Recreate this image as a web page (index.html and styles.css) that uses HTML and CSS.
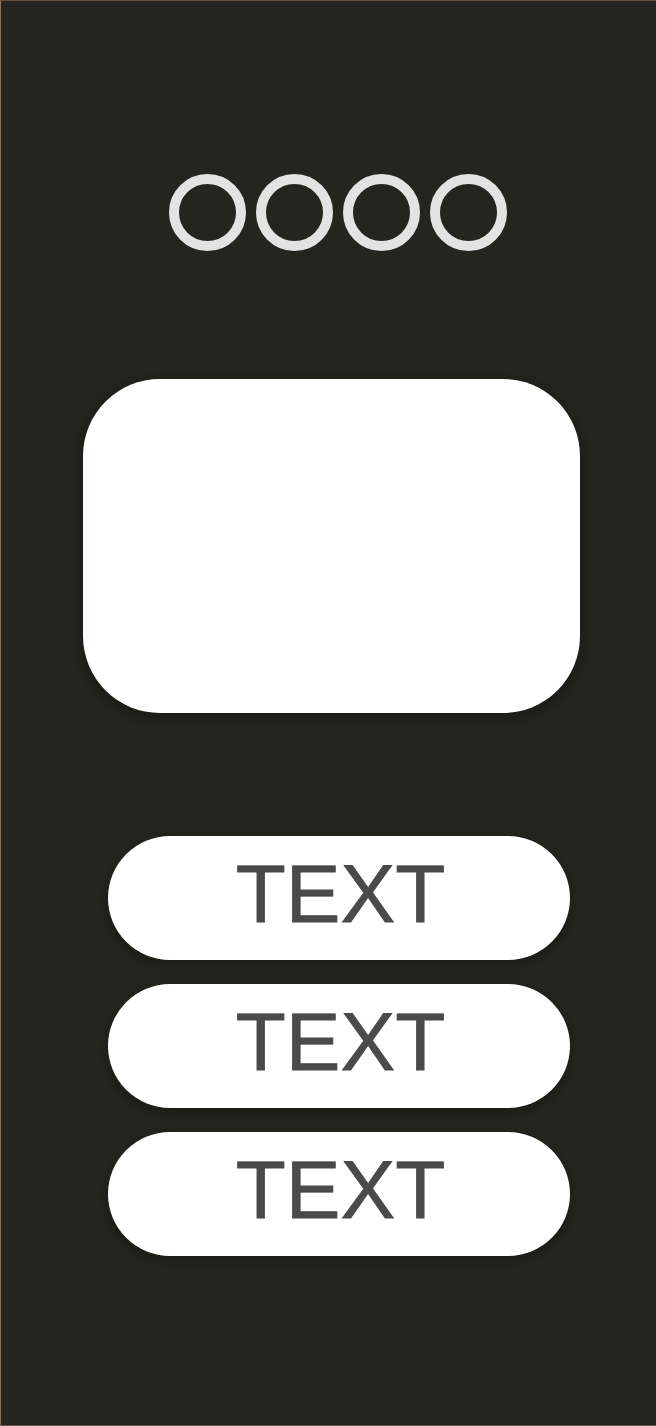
FILE: index.html
```html
<!DOCTYPE html>
<html>
<head>
<meta charset="utf-8">
<link rel="stylesheet" href="styles.css">
</head>
<body>
<div class="screen">
  <div class="dots">
    <span class="dot"></span>
    <span class="dot"></span>
    <span class="dot"></span>
    <span class="dot"></span>
  </div>
  <div class="card"></div>
  <div class="buttons">
    <div class="btn">TEXT</div>
    <div class="btn">TEXT</div>
    <div class="btn">TEXT</div>
  </div>
</div>
</body>
</html>
```
FILE: styles.css
```css
html, body {
  margin: 0;
  padding: 0;
  background: #24251e;
}
.screen {
  box-sizing: border-box;
  width: 656px;
  height: 1426px;
  background: #24251e;
  border-top: 1px solid #5e4f3f;
  border-left: 1px solid #8a7060;
  border-bottom: 1px solid #5a5446;
  display: flex;
  flex-direction: column;
  align-items: flex-start;
  padding-top: 173px;
}
.dots {
  display: flex;
  gap: 10px;
  margin-left: 168px;
}
.dot {
  box-sizing: border-box;
  width: 77px;
  height: 77px;
  border: 10px solid #e3e3e3;
  border-radius: 50%;
}
.card {
  margin-top: 128px;
  margin-left: 82px;
  width: 497px;
  height: 334px;
  background: #ffffff;
  border-radius: 77px;
  box-shadow: 0 4px 18px rgba(0, 0, 0, 0.35);
}
.buttons {
  margin-top: 123px;
  margin-left: 107px;
  display: flex;
  flex-direction: column;
  gap: 24px;
}
.btn {
  box-sizing: border-box;
  width: 462px;
  height: 124px;
  background: #ffffff;
  border-radius: 62px;
  box-shadow: 0 4px 14px rgba(0, 0, 0, 0.3);
  display: flex;
  align-items: center;
  justify-content: center;
  padding-bottom: 8px;
  padding-left: 3px;
  font-family: "Liberation Sans", Arial, sans-serif;
  font-size: 82px;
  line-height: 1;
  color: #4a4a4a;
  -webkit-text-stroke: 0.8px #4a4a4a;
}
```
